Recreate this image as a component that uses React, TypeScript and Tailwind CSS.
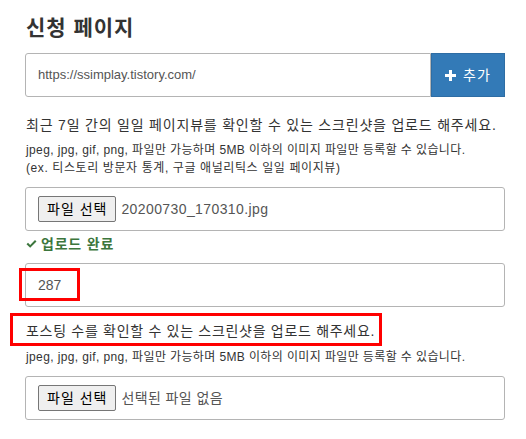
import React from 'react';

const font = { fontFamily: '"Liberation Sans", "Noto Sans CJK KR", sans-serif' };

function FileField({ fileName }: { fileName?: string }) {
  return (
    <div className="h-[44px] border border-[#b4b4b4] rounded-[3px] bg-white flex items-center pl-[12px]">
      <span className="h-[26px] px-[8px] flex items-center bg-[#efefef] border border-[#767676] rounded-[2px] text-[14px] tracking-[1px] text-black">
        파일 선택
      </span>
      <span className="ml-[5px] text-[14px] text-[#555] tracking-[0.4px]">{fileName || '선택된 파일 없음'}</span>
    </div>
  );
}

export default function App() {
  return (
    <div className="relative w-[526px] h-[439px] bg-white text-[#333]" style={font}>
      <div className="pl-[25px] w-[505px] pt-[13px]">
        <h3 className="text-[21px] leading-[30px] font-bold text-[#333] pl-px tracking-[1px]">신청 페이지</h3>

        <div className="mt-[10px] flex h-[44px]">
          <div className="flex-1 border border-[#b4b4b4] rounded-l-[3px] flex items-center pl-[12px] text-[13px] text-[#555]">
            https://ssimplay.tistory.com/
          </div>
          <button className="w-[74px] bg-[#337ab7] border border-[#2e6da4] text-white text-[14px] tracking-[1px] flex items-center justify-center gap-[7px]">
            <svg width="11" height="11" viewBox="0 0 11 11">
              <path d="M4 0h3v4h4v3H7v4H4V7H0V4h4z" fill="#fff" />
            </svg>
            추가
          </button>
        </div>

        <p className="mt-[18px] text-[14px] leading-[20px] pl-px tracking-[0.8px]">
          최근 7일 간의 일일 페이지뷰를 확인할 수 있는 스크린샷을 업로드 해주세요.
        </p>
        <p className="mt-[7px] text-[12px] leading-[17px] pl-px tracking-[0.38px]">
          jpeg, jpg, gif, png, 파일만 가능하며 5MB 이하의 이미지 파일만 등록할 수 있습니다.
        </p>
        <p className="mt-[1px] text-[12px] leading-[17px] pl-px tracking-[0.6px]">
          (ex. 티스토리 방문자 통계, 구글 애널리틱스 일일 페이지뷰)
        </p>

        <div className="mt-[10px]">
          <FileField fileName="20200730_170310.jpg" />
        </div>

        <div className="mt-[3px] h-[20px] flex items-center gap-[4px] text-[#3c763d] text-[14px] font-bold pl-px tracking-[0.8px]">
          <svg width="11" height="10" viewBox="0 0 11 10">
            <path d="M0.5 5.2 L2 3.7 L4.2 5.9 L9 1 L10.5 2.5 L4.2 8.8 Z" fill="#3c763d" />
          </svg>
          업로드 완료
        </div>

        <div className="mt-[9px] h-[44px] border border-[#b4b4b4] rounded-[3px] flex items-center pl-[12px] text-[14px] text-[#555]">
          287
        </div>

        <p className="mt-[14px] text-[14px] leading-[20px] pl-px tracking-[0.7px]">
          포스팅 수를 확인할 수 있는 스크린샷을 업로드 해주세요.
        </p>
        <p className="mt-[8px] text-[12px] leading-[17px] pl-px tracking-[0.38px]">
          jpeg, jpg, gif, png, 파일만 가능하며 5MB 이하의 이미지 파일만 등록할 수 있습니다.
        </p>

        <div className="mt-[10px]">
          <FileField />
        </div>
      </div>

      <div className="absolute left-[19px] top-[268px] w-[61px] h-[33px] border-[3px] border-[#ff0000]" />
      <div className="absolute left-[10px] top-[313px] w-[372px] h-[33px] border-[3px] border-[#ff0000]" />
    </div>
  );
}
